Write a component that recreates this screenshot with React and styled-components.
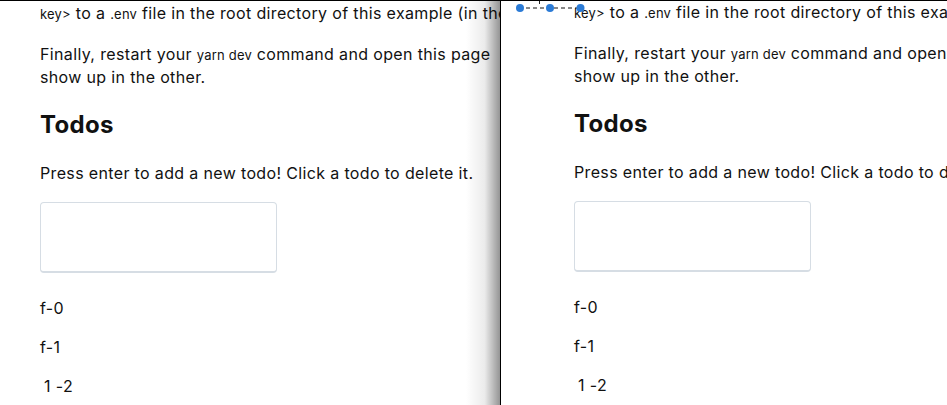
import styled, { createGlobalStyle } from "styled-components";

const GlobalStyle = createGlobalStyle`
  html, body {
    margin: 0;
    padding: 0;
    background: #fff;
  }
  body {
    font-family: Inter, "Noto Sans", "Liberation Sans", sans-serif;
    color: #111;
    -webkit-font-smoothing: antialiased;
  }
`;

const Split = styled.div`
  display: flex;
  width: 947px;
  height: 405px;
  overflow: hidden;
`;

const Pane = styled.div`
  position: relative;
  flex: ${(p) => (p.$width ? `0 0 ${p.$width}px` : "1 1 auto")};
  overflow: hidden;
  border-top: 1px solid #000;
  padding-left: ${(p) => p.$inset}px;
  box-sizing: border-box;
  ${(p) =>
    p.$shadow &&
    `
    border-right: 1px solid #000;
    &::after {
      content: "";
      position: absolute;
      top: 0;
      right: 0;
      width: 34px;
      height: 100%;
      background: linear-gradient(to right, rgba(0,0,0,0), rgba(0,0,0,0.08) 55%, rgba(0,0,0,0.42));
      pointer-events: none;
    }
  `}
`;

const Para = styled.p`
  margin: 0 0 18px;
  font-size: 16px;
  line-height: 22px;
  letter-spacing: 0.35px;
  white-space: nowrap;
  &:first-child {
    margin-top: 1px;
  }
`;

const Line = styled.span`
  display: block;
`;

const Code = styled.code`
  font-family: inherit;
  font-size: 13px;
  letter-spacing: 0.2px;
`;

const Heading = styled.h2`
  margin: 22px 0 22px;
  font-size: 24px;
  line-height: 30px;
  font-weight: 700;
  letter-spacing: 0.3px;
`;

const TodoInput = styled.input`
  display: block;
  width: 237px;
  height: 71px;
  margin: 15px 0 24px;
  box-sizing: border-box;
  border: 1px solid #d6dde4;
  border-bottom-width: 2px;
  border-radius: 4px;
  background: #fff;
  outline: none;
`;

const TodoList = styled.ul`
  list-style: none;
  margin: 0;
  padding: 0;
`;

const Todo = styled.li`
  font-size: 16px;
  line-height: 22px;
  letter-spacing: 0.35px;
  margin-bottom: 17px;
  padding-left: ${(p) => (p.$nudge ? 4 : 0)}px;
  cursor: pointer;
`;

const Handles = styled.svg`
  position: absolute;
  top: 0;
  left: 10px;
  overflow: visible;
`;

const todos = ["f-0", "f-1", "1 -2"];

const Content = () => (
  <>
    <Para>
      <Code>key&gt;</Code> to a <Code>.env</Code> file in the root directory of
      this example (in the same folder as this README).
    </Para>
    <Para>
      <Line>
        Finally, restart your <Code>yarn dev</Code> command and open this page
      </Line>
      <Line>show up in the other.</Line>
    </Para>
    <Heading>Todos</Heading>
    <Para>Press enter to add a new todo! Click a todo to delete it.</Para>
    <TodoInput type="text" />
    <TodoList>
      {todos.map((t, i) => (
        <Todo key={t} $nudge={i === 2}>
          {t}
        </Todo>
      ))}
    </TodoList>
  </>
);

export default function App() {
  return (
    <>
      <GlobalStyle />
      <Split>
        <Pane $width={501} $inset={40} $shadow>
          <Content />
        </Pane>
        <Pane $inset={73}>
          <Handles width="80" height="14">
            <rect x="0" y="0" width="76" height="2" fill="#fff" />
            <line x1="8" y1="7" x2="69" y2="7" stroke="#111" strokeWidth="1" strokeDasharray="4 3" />
            <line x1="28.5" y1="0" x2="28.5" y2="3" stroke="#222" strokeWidth="1" />
            <circle cx="9" cy="7" r="4" fill="#2b7bd6" />
            <circle cx="39" cy="7" r="4" fill="#2b7bd6" />
            <circle cx="69.5" cy="7" r="4" fill="#2b7bd6" />
          </Handles>
          <Content />
        </Pane>
      </Split>
    </>
  );
}
